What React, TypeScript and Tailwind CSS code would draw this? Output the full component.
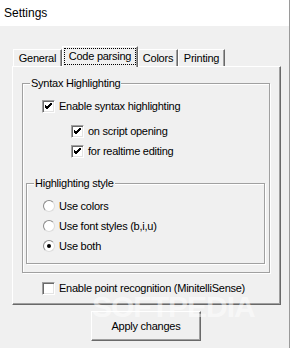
import React from "react";

const sunken =
  "border-t border-l border-t-[#a0a0a0] border-l-[#a0a0a0] border-r border-b border-r-white border-b-white shadow-[inset_1px_1px_0_#696969,inset_-1px_-1px_0_#e3e3e3]";

const CheckBox = ({ checked, label }: { checked: boolean; label: string }) => (
  <div className="flex items-center h-[13px] gap-[4px]">
    <div className={`w-[13px] h-[13px] bg-white flex items-center justify-center ${sunken}`}>
      {checked && (
        <svg width="7" height="7" viewBox="0 0 7 7">
          <path d="M0 2 L2 4 L7 -1 M0 3 L2 5 L7 0 M0 4 L2 6 L7 1" stroke="#000" strokeWidth="1" fill="none" shapeRendering="crispEdges" />
        </svg>
      )}
    </div>
    <span className="leading-[13px]">{label}</span>
  </div>
);

const Radio = ({ checked, label }: { checked: boolean; label: string }) => (
  <div className="flex items-center h-[12px] gap-[4px]">
    <div className="w-[12px] h-[12px] rounded-full bg-white border border-t-[#8a8a8a] border-l-[#8a8a8a] border-r-[#dcdcdc] border-b-[#dcdcdc] flex items-center justify-center">
      {checked && <div className="w-[4px] h-[4px] rounded-full bg-black" />}
    </div>
    <span className="leading-[13px]">{label}</span>
  </div>
);

const GroupBox = ({
  title,
  className,
  children,
}: {
  title: string;
  className: string;
  children: React.ReactNode;
}) => (
  <div
    className={`relative border border-[#a0a0a0] shadow-[inset_1px_1px_0_#fff,1px_1px_0_#fff] ${className}`}
  >
    <span className="absolute left-[7px] top-[-8px] px-[1px] bg-[#f0f0f0] leading-[14px]">
      {title}
    </span>
    {children}
  </div>
);

const Tab = ({ label, w }: { label: string; w: string }) => (
  <div
    className={`${w} h-[17px] self-end flex items-center justify-center bg-[#f0f0f0] border-t border-l border-white border-r border-r-[#696969] shadow-[inset_-1px_0_0_#a0a0a0]`}
  >
    {label}
  </div>
);

export default function App() {
  return (
    <div className="relative w-[290px] h-[348px] bg-[#f0f0f0] border-r border-[#9a9a9a] flex flex-col text-[11px] tracking-[-0.25px] text-black font-['Liberation_Sans',Arial,sans-serif] overflow-hidden">
      <div className="h-[26px] bg-white flex items-center pl-[4px] text-[12px] tracking-normal">Settings</div>

      <div className="mt-[20px] ml-[13px] h-[20px] flex">
        <Tab label="General" w="w-[49px]" />
        <div className="relative z-10 w-[76px] h-[21px] self-start bg-[#f0f0f0] border-t border-l border-white border-r border-r-[#696969] shadow-[inset_-1px_0_0_#a0a0a0] pt-[1px] pl-[1px] pr-[1px]">
          <div className="h-[17px] border border-dotted border-black flex items-center justify-center">
            Code parsing
          </div>
        </div>
        <Tab label="Colors" w="w-[40px]" />
        <Tab label="Printing" w="w-[47px]" />
      </div>

      <div className="ml-[12px] w-[269px] h-[239px] border-t border-l border-white border-r border-b border-r-[#696969] border-b-[#696969] shadow-[inset_-1px_-1px_0_#a0a0a0] flex flex-col">
        <GroupBox title="Syntax Highlighting" className="ml-[9px] mt-[16px] w-[248px] h-[190px] flex flex-col">
          <div className="ml-[19px] mt-[16px]">
            <CheckBox checked label="Enable syntax highlighting" />
          </div>
          <div className="ml-[48px] mt-[12px]">
            <CheckBox checked label="on script opening" />
          </div>
          <div className="ml-[48px] mt-[7px]">
            <CheckBox checked label="for realtime editing" />
          </div>
          <GroupBox title="Highlighting style" className="ml-[3px] mt-[25px] w-[239px] h-[81px] flex flex-col">
            <div className="ml-[16px] mt-[16px]">
              <Radio checked={false} label="Use colors" />
            </div>
            <div className="ml-[16px] mt-[8px]">
              <Radio checked={false} label="Use font styles (b,i,u)" />
            </div>
            <div className="ml-[16px] mt-[8px]">
              <Radio checked label="Use both" />
            </div>
          </GroupBox>
        </GroupBox>
        <div className="ml-[29px] mt-[9px]">
          <CheckBox checked={false} label="Enable point recognition (MinitelliSense)" />
        </div>
      </div>

      <button className="ml-[91px] mt-[6px] w-[110px] h-[30px] bg-[#f0f0f0] border-t border-l border-white border-r border-b border-r-[#696969] border-b-[#696969] shadow-[inset_-1px_-1px_0_#a0a0a0] flex items-center justify-center text-[11px]">
        Apply changes
      </button>

      <div className="absolute left-[92px] top-[292px] pointer-events-none text-[30px] font-bold tracking-[-1px] text-white/50 leading-none">
        SOFTPEDIA
      </div>
    </div>
  );
}
